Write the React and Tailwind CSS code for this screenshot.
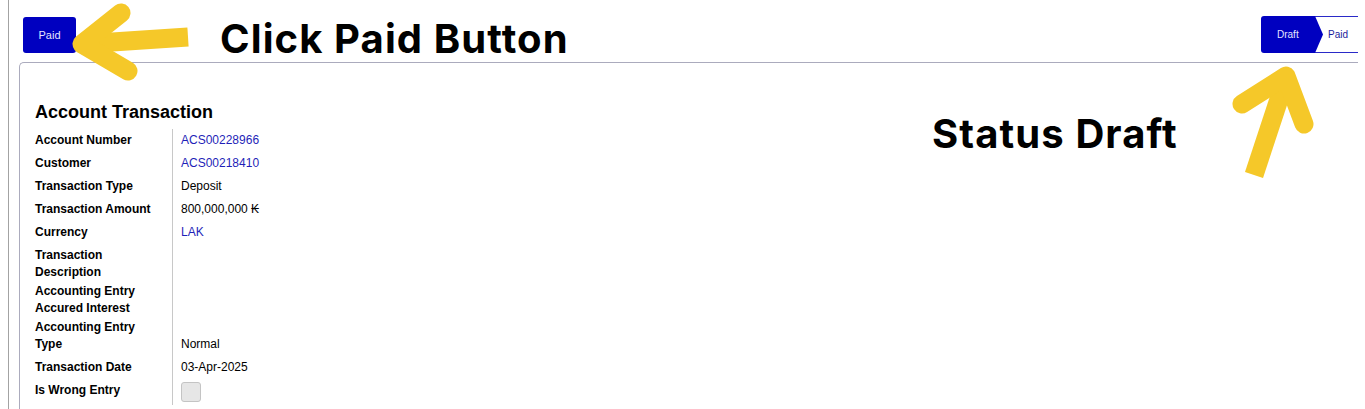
import React from 'react'

const ROWS = [
  { label: 'Account Number', value: 'ACS00228966', link: true },
  { label: 'Customer', value: 'ACS00218410', link: true },
  { label: 'Transaction Type', value: 'Deposit' },
  { label: 'Transaction Amount', value: '800,000,000 ₭' },
  { label: 'Currency', value: 'LAK', link: true },
  { label: 'Transaction Description', value: '', pad: 'pt-[3px] pb-px' },
  { label: 'Accounting Entry Accured Interest', value: '', pad: 'py-px' },
  { label: 'Accounting Entry Type', value: 'Normal', pad: 'pt-px pb-[3px]', bottom: true },
  { label: 'Transaction Date', value: '03-Apr-2025' },
  { label: 'Is Wrong Entry', checkbox: true },
]

function Arrows() {
  return (
    <svg className="absolute inset-0 pointer-events-none" width="1365" height="409">
      <g stroke="#F5C829" fill="none" strokeWidth="19">
        {/* left arrow */}
        <line x1="82" y1="44" x2="188" y2="37" strokeLinecap="butt" />
        <polyline points="121,13 82,44 128,71" strokeLinecap="round" strokeLinejoin="round" />
        {/* up arrow */}
        <line x1="1286" y1="78" x2="1254" y2="175" strokeLinecap="butt" />
        <polyline points="1242,104 1286,76 1304,124" strokeLinecap="round" strokeLinejoin="round" />
      </g>
    </svg>
  )
}

export default function App() {
  return (
    <div
      className="relative w-[1365px] h-[409px] overflow-hidden bg-white"
      style={{ fontFamily: '"Liberation Sans", Arial, sans-serif' }}
    >
      <div className="ml-2 h-full border-l border-[#a3a3a3] pl-[10px] pr-[7px]">
        {/* top bar */}
        <div className="flex items-start justify-between pt-[16px] h-[62px]">
          <button className="ml-[4px] mt-px w-[53px] h-[36px] rounded-[3px] bg-[#0000c0] text-[11px] text-[#e4e4ff]">
            Paid
          </button>
          <div className="flex h-[37px]">
            <div
              className="w-[62px] h-full bg-[#0000c0] rounded-l-[3px] text-[10px] text-[#e4e4ff] flex items-center pl-[16px] z-10"
              style={{ clipPath: 'polygon(0 0, 54px 0, 62px 50%, 54px 100%, 0 100%)' }}
            >
              Draft
            </div>
            <div className="-ml-[9px] w-[44px] h-full border-y border-[#2a2ac8] flex items-center pl-[14px] text-[10px] text-[#1c1c9c]">
              Paid
            </div>
          </div>
        </div>

        {/* card */}
        <div className="h-full border-t border-l border-[#ababbd] rounded-tl-[5px] pl-[15px] pt-[38px]">
          <h2 className="text-[18px] leading-[22px] font-bold text-black mb-[6px]">Account Transaction</h2>
          <div className="grid grid-cols-[137px_1fr] text-[12px] leading-[17px]">
            {ROWS.map((r) => (
              <React.Fragment key={r.label}>
                <div className={`pr-[15px] font-bold text-black ${r.pad || 'py-[3px]'}`}>{r.label}</div>
                <div
                  className={`border-l border-[#c8c8c8] pl-2 flex ${r.bottom ? 'items-end' : 'items-start'} ${r.pad || 'py-[3px]'} ${
                    r.link ? 'text-[#1f1fb8]' : 'text-black'
                  }`}
                >
                  {r.checkbox ? (
                    <span className="block w-[20px] h-[20px] rounded-[3px] border border-[#c4c4c4] bg-[#e6e6e6]" />
                  ) : (
                    r.value
                  )}
                </div>
              </React.Fragment>
            ))}
          </div>
        </div>
      </div>

      <Arrows />

      <div
        className="absolute left-[220px] top-[15px] text-[40px] leading-[48px] font-bold tracking-[1.1px] text-black"
        style={{ fontFamily: 'Inter, "Open Sans", sans-serif' }}
      >
        Click Paid Button
      </div>
      <div
        className="absolute left-[932px] top-[110px] text-[40px] leading-[48px] font-bold tracking-[1.1px] text-black"
        style={{ fontFamily: 'Inter, "Open Sans", sans-serif' }}
      >
        Status Draft
      </div>
    </div>
  )
}
